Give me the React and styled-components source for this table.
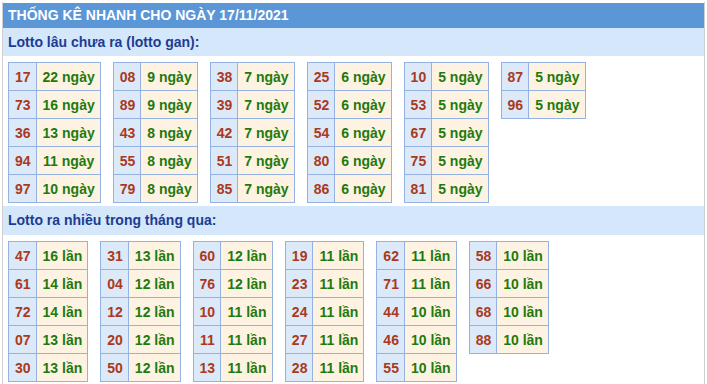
import React from 'react';
import styled, {createGlobalStyle} from 'styled-components';

const GlobalStyle = createGlobalStyle`
    body {
        margin: 0;
        background: #fff;
        font-family: "Liberation Sans", Arial, sans-serif;
    }
`;

const Box = styled.div`
    margin: 2px 2px 0 2px;
    border: 1px solid #d0d0d0;
    border-top: none;
    padding-top: 1px;
`;

const Title = styled.div`
    height: 25px;
    line-height: 25px;
    background-color: #5b96d6;
    color: #fff;
    font-weight: bold;
    font-size: 14px;
    padding-left: 5px;
`;

const Band = styled.div`
    height: ${props => props.tall ? 29 : 28}px;
    line-height: ${props => props.tall ? 29 : 28}px;
    background-color: #d4e7fb;
    color: #1d3c91;
    font-weight: bold;
    font-size: 14px;
    padding-left: 5px;
`;

const Tables = styled.div`
    display: flex;
    align-items: flex-start;
    gap: 12px;
    padding: 6px 5px 3px 5px;
`;

const Table = styled.table`
    border-collapse: collapse;
    font-size: 14px;
    font-weight: bold;
`;

const Num = styled.td`
    height: 27px;
    padding: 0 5px 0 6px;
    text-align: center;
    border: 1px solid #94b3e2;
    background-color: #dce9f9;
    color: #a93a20;
`;

const Val = styled.td`
    padding: 0 5px 0 6px;
    text-align: center;
    white-space: nowrap;
    border: 1px solid #94b3e2;
    background-color: #fef3e2;
    color: #1f7a0e;
`;

const gan = [
    [['17', 22], ['73', 16], ['36', 13], ['94', 11], ['97', 10]],
    [['08', 9], ['89', 9], ['43', 8], ['55', 8], ['79', 8]],
    [['38', 7], ['39', 7], ['42', 7], ['51', 7], ['85', 7]],
    [['25', 6], ['52', 6], ['54', 6], ['80', 6], ['86', 6]],
    [['10', 5], ['53', 5], ['67', 5], ['75', 5], ['81', 5]],
    [['87', 5], ['96', 5]],
];

const nhieu = [
    [['47', 16], ['61', 14], ['72', 14], ['07', 13], ['30', 13]],
    [['31', 13], ['04', 12], ['12', 12], ['20', 12], ['50', 12]],
    [['60', 12], ['76', 12], ['10', 11], ['11', 11], ['13', 11]],
    [['19', 11], ['23', 11], ['24', 11], ['27', 11], ['28', 11]],
    [['62', 11], ['71', 11], ['44', 10], ['46', 10], ['55', 10]],
    [['58', 10], ['66', 10], ['68', 10], ['88', 10]],
];

const Group = ({cols, unit}) => (
    <Tables>
        {cols.map((rows, i) => (
            <Table key={i}>
                <tbody>
                    {rows.map(([n, c]) => (
                        <tr key={n}>
                            <Num>{n}</Num>
                            <Val>{c} {unit}</Val>
                        </tr>
                    ))}
                </tbody>
            </Table>
        ))}
    </Tables>
);

const App = () => {
    return (
        <>
            <GlobalStyle/>
            <Box>
                <Title>THỐNG KÊ NHANH CHO NGÀY 17/11/2021</Title>
                <Band>Lotto lâu chưa ra (lotto gan):</Band>
                <Group cols={gan} unit="ngày"/>
                <Band tall>Lotto ra nhiều trong tháng qua:</Band>
                <Group cols={nhieu} unit="lần"/>
            </Box>
        </>
    );
}

export default App
